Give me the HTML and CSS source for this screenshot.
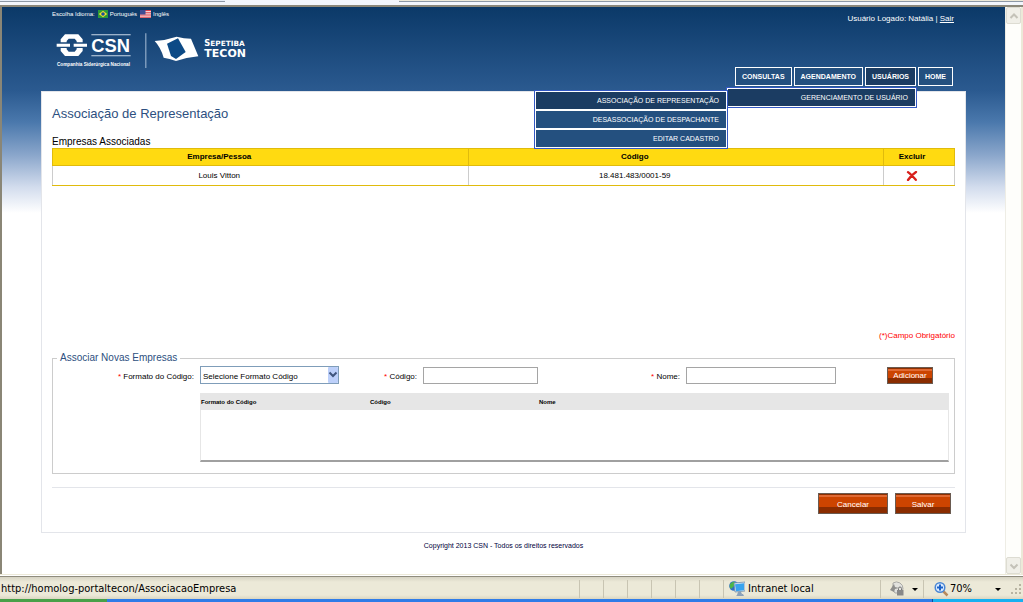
FILE: index.html
```html
<!DOCTYPE html>
<html lang="pt-BR">
<head>
<meta charset="utf-8">
<title>Associação de Representação</title>
<link rel="stylesheet" href="styles.css">
</head>
<body>
<div class="tabstrip">
  <span class="tab tab-left"></span>
  <span class="tab-space"></span>
  <span class="tab tab-right"></span>
</div>

<div class="viewport">
  <div class="page">
    <header class="header">
      <div class="brand">
        <div class="langs">
          <span>Escolha Idioma:</span>
          <a href="#pt"><svg class="flag" viewBox="0 0 10 8"><rect width="10" height="8" fill="#2a9a3c"/><path d="M5 .8 9.2 4 5 7.2.8 4z" fill="#f4e02a"/><circle cx="5" cy="4" r="1.8" fill="#1d4f9c"/></svg>Português</a>
          <a href="#en"><svg class="flag flag-us" viewBox="0 0 11 8"><rect width="11" height="8" fill="#f3d4d6"/><path d="M0 .5h11M0 2.7h11M0 5h11M0 7.3h11" stroke="#d9404c" stroke-width="1.1"/><rect width="5.5" height="4.5" fill="#3d4d94"/></svg>Inglês</a>
        </div>
        <svg class="logo" viewBox="156 90 630 120" role="img" aria-label="CSN Sepetiba Tecon">
          <g fill="#fff">
            <path d="M182 127v-9l13-15h40l13 15v9h-18v-4l-6-7h-18l-6 7v4z"/>
            <path d="M182 144v9l13 15h40l13-15v-9h-18v4l-6 7h-18l-6-7v-4z"/>
            <path d="M170 131h40v9h-40zM221 131h40v9h-40z"/>
            <path d="M274 103h118v3H274zM274 166h118v3H274z" fill="#c8d6e6"/>
            <text class="logo-csn" x="274" y="156">CSN</text>
            <text class="logo-tag" x="171" y="199">Companhia Siderúrgica Nacional</text>
            <path d="M436 100h3v104h-3z" fill="#a9bfd8"/>
            <path d="M464 123Q500 120 530 110Q552 116 573 116L595 169Q558 173 528 183Q508 176 491 173Q482 142 464 123z"/>
            <path d="M501 131L534 115L557 156L528 177L513 168z" fill="#0c4a86"/>
            <text class="logo-sep" x="613" y="139"><tspan class="logo-cap">S</tspan>EPETIBA</text>
            <text class="logo-tecon" x="613" y="172">TECON</text>
          </g>
        </svg>
      </div>
      <div class="account">
        <p class="user">Usuário Logado: Natália | <a href="#sair">Sair</a></p>
        <nav>
          <ul class="menu">
            <li><a href="#consultas">CONSULTAS</a></li>
            <li><a href="#agendamento">AGENDAMENTO</a></li>
            <li class="open"><a href="#usuarios">USUÁRIOS</a>
              <ul class="submenu level-one">
                <li class="open"><a href="#gerenciamento">GERENCIAMENTO DE USUÁRIO</a>
                  <ul class="submenu level-two">
                    <li class="open"><a href="#associacao">ASSOCIAÇÃO DE REPRESENTAÇÃO</a></li>
                    <li><a href="#desassociacao">DESASSOCIAÇÃO DE DESPACHANTE</a></li>
                    <li><a href="#cadastro">EDITAR CADASTRO</a></li>
                  </ul>
                </li>
              </ul>
            </li>
            <li><a href="#home">HOME</a></li>
          </ul>
        </nav>
      </div>
    </header>

    <main class="card">
      <h1>Associação de Representação</h1>
      <section class="companies">
        <h2>Empresas Associadas</h2>
        <table class="list">
          <colgroup><col><col><col class="col-del"></colgroup>
          <thead><tr><th>Empresa/Pessoa</th><th>Código</th><th>Excluir</th></tr></thead>
          <tbody><tr><td>Louis Vitton</td><td>18.481.483/0001-59</td><td><button class="delete" type="button" aria-label="Excluir"><svg viewBox="0 0 12 10"><path d="M2 1.2Q5 3.5 9.8 8.8M10 1Q5.500 4 2 9" fill="none" stroke="#d8201c" stroke-width="2.300" stroke-linecap="round"/></svg></button></td></tr></tbody>
        </table>
      </section>
      <p class="required">(*)Campo Obrigatório</p>
      <fieldset>
        <legend>Associar Novas Empresas</legend>
        <div class="form">
          <label for="formato"><i>*</i> Formato do Código:</label>
          <span class="select"><select id="formato"><option>Selecione Formato Código</option></select><svg viewBox="0 0 10 16"><rect width="10" height="16" rx="1" fill="#bdd0fa"/><path d="M1.500 5.500 5 9l3.500-3.500" fill="none" stroke="#3f557d" stroke-width="2"/></svg></span>
          <label for="codigo"><i>*</i> Código:</label>
          <input id="codigo" type="text">
          <label for="nome"><i>*</i> Nome:</label>
          <input id="nome" type="text">
          <button class="btn btn-add" type="button">Adicionar</button>
          <div class="results">
            <table>
              <thead><tr><th>Formato do Código</th><th>Código</th><th class="rest">Nome</th></tr></thead>
            </table>
          </div>
        </div>
      </fieldset>
      <div class="actions">
        <button class="btn btn-cancel" type="button">Cancelar</button>
        <button class="btn btn-save" type="button">Salvar</button>
      </div>
    </main>
    <footer>Copyright 2013 CSN - Todos os direitos reservados</footer>
  </div>
  <div class="scrollbar">
    <button type="button" aria-label="Rolar para cima"><svg viewBox="0 0 10 10"><path d="M1.500 7 5 3.500 8.500 7" fill="none" stroke="#c4c2b8" stroke-width="2"/></svg></button>
    <button type="button" aria-label="Rolar para baixo"><svg viewBox="0 0 10 10"><path d="M1.500 3.500 5 7l3.500-3.500" fill="none" stroke="#c4c2b8" stroke-width="2"/></svg></button>
  </div>
</div>

<div class="status">
  <span class="url">http://homolog-portaltecon/AssociacaoEmpresa</span>
  <span class="cell"></span><span class="cell"></span><span class="cell"></span><span class="cell"></span><span class="cell"></span><span class="cell"></span>
  <span class="cell zone"><svg class="ico" viewBox="0 0 16 16"><circle cx="5" cy="5" r="4.800" fill="#2d6fc4"/><path d="M1 3q3-3 5-2l-1 4-3 3Q0 6 1 3z" fill="#4cb648"/><path d="M5 2l11-1v9l-10 1z" fill="#dfe8f2" stroke="#6f8dab" stroke-width=".8"/><path d="M6 3.200l9-1v7l-8 1z" fill="#38a3ee"/><path d="M9 11h3l1 2-5 1zM7 14l7-1 1 2H8z" fill="#8ba0b8"/></svg>Intranet local</span>
  <span class="cell lock"><svg class="ico" viewBox="0 0 16 16"><path d="M4 2a6.500 6.500 0 0 1 10 6l-2 4H6L4 9z" fill="#e2e2de" stroke="#a9a9a5"/><path d="M1 9l4-6 1 3 4 1-4 1-1 3z" fill="#8e8e8c"/><path d="M9.500 9V7.500a1.500 1.500 0 0 1 3 0V9" fill="none" stroke="#777"/><rect x="8" y="9" width="6.500" height="5.500" fill="#888"/></svg><span class="caret"></span></span>
  <span class="cell zoom"><svg class="ico" viewBox="0 0 16 16"><path d="M9.500 9.500l5 5" stroke="#b98a5c" stroke-width="2.500"/><circle cx="7" cy="6.500" r="4.800" fill="#dcecff" stroke="#4a86d4" stroke-width="1.500"/><path d="M7 3.500v6M4 6.500h6" stroke="#1d62c8" stroke-width="2"/></svg>70%<span class="caret caret-end"></span></span>
  <svg class="grip" viewBox="0 0 12 12"><path d="M8 1h2v2H8zM4 5h2v2H4zM8 5h2v2H8zM0 9h2v2H0zM4 9h2v2H4zM8 9h2v2H8z" fill="#b8b4a2"/></svg>
</div>
<div class="taskbar"><span class="start"></span><span class="tasks"></span><span class="tray"></span></div>
</body>
</html>
```
FILE: styles.css
```css
* { box-sizing: border-box; }

body {
  margin: 0;
  min-height: 100vh;
  display: flex;
  flex-direction: column;
  background: #fff;
  color: #000;
  font: 8px/12px "Liberation Sans", Arial, sans-serif;
}
h1, h2, p, ul { margin: 0; padding: 0; font-weight: normal; }
ul { list-style: none; }
button, input, select { font: inherit; margin: 0; border-radius: 0; }
svg { display: block; }

/* Browser tab strip */
.tabstrip {
  display: flex;
  height: 7px;
  background: #f2f6fc;
  border-bottom: 2px solid #8b887a;
}
.tab { height: 2px; border-bottom: 1px solid #8c98a6; background: #e6eef8; }
.tab-left { width: 22%; }
.tab-space { width: 17%; }
.tab-right { flex: 1; background: #ece9d8; }

.viewport {
  flex: 1;
  display: flex;
  border-left: 2px solid #8a8676;
  border-right: 2px solid #ece9d8;
}
.page {
  flex: 1;
  padding: 0 39px;
  background: linear-gradient(#0b3968 0, #2b5a90 84px, #4a78ac 115px, #8aa6cb 148px, #d2dced 180px, #fff 206px);
}

/* Header */
.header { display: flex; justify-content: space-between; height: 84px; padding: 0 12px 0 11px; }
.langs { display: flex; align-items: center; gap: 3px; padding-top: 1px; font-size: 6px; color: #fff; }
.langs a { display: flex; align-items: center; gap: 2px; color: #fff; text-decoration: none; }
.flag { width: 10px; height: 8px; }
.flag-us { width: 11px; }
.logo { width: 210px; height: 40px; margin-top: 10px; }
.logo text { font-family: "Liberation Sans", Arial, sans-serif; font-weight: bold; }
.logo .logo-csn { font-size: 55px; }
.logo .logo-tag { font-size: 14px; }
.logo .logo-sep { font: bold 22px "DejaVu Sans", sans-serif; }
.logo .logo-cap { font-size: 25px; }
.logo .logo-tecon { font: bold 33px "DejaVu Sans", sans-serif; }
.account { display: flex; flex-direction: column; justify-content: space-between; align-items: flex-end; }
.user { padding-top: 6px; color: #fff; }
.user a { color: #fff; }

.menu { display: flex; gap: 2px; padding: 0 1px 5px 0; font-size: 7px; white-space: nowrap; }
.menu a { display: block; color: #fff; text-decoration: none; }
.menu > li { position: relative; border: 1px solid #fff; background: #24507f; }
.menu > li > a { padding: 3px 6px 2px; font-weight: bold; }
.menu .open { background: #1b3c62; }
.submenu {
  position: absolute;
  z-index: 2;
  border: 1px solid #3358c4;
  background: #24507f;
  text-align: right;
}
.submenu a { padding: 3px 7px 2px; }
.submenu li { border: 1px solid #fff; }
.level-one { top: 19px; right: -2px; width: 191px; }
.level-two { top: 2px; right: 188px; width: 194px; }

/* Content card */
.card {
  min-height: 442px;
  padding: 0 10px;
  border: 1px solid #e3e5ea;
  background: #fff;
}
h1 { padding-top: 14px; font-size: 13px; line-height: 16px; color: #2d4f80; }
h2 { padding-top: 14px; font-size: 10px; line-height: 12px; }
.companies { min-height: 208px; }
.list { width: 100%; border-collapse: collapse; table-layout: fixed; }
.col-del { width: 71px; }
.list th, .list td { padding: 0 82px 0 0; border: 1px solid #ccc; text-align: center; }
.list th:last-child, .list td:last-child { padding-right: 14px; }
.list th { height: 17px; border-color: #e0bb0c; background: #ffda11; }
.list td { height: 20px; border-bottom-color: #e0bb0c; }
.delete { display: block; margin: 0 auto; padding: 0; border: 0; background: none; }
.delete svg { width: 12px; height: 10px; }

.required { color: #f00; text-align: right; }
fieldset {
  min-width: 0;
  min-height: 121px;
  margin: 10px 0 0;
  padding: 0 0 11px;
  border: 1px solid #ccc;
}
legend { margin-left: 4px; padding: 0 3px; font-size: 10px; line-height: 12px; color: #2d4f80; }
.form {
  display: grid;
  grid-template-columns: 147fr 139fr 84fr 115fr 148fr 150fr 51fr 62fr 5fr;
  row-gap: 9px;
  align-items: center;
  padding-top: 2px;
}
label { padding: 3px 6px 0 0; text-align: right; white-space: nowrap; }
label i { color: #f00; font-style: normal; }
.form input { width: 100%; height: 17px; padding: 0 3px; border: 1px solid #a5a5a5; }
.select { position: relative; }
.select select {
  display: block;
  width: 100%;
  height: 18px;
  padding: 3px 12px 0 2px;
  border: 1px solid #7f9db9;
  background: #fff;
  color: #000;
  appearance: none;
}
.select svg { position: absolute; top: 1px; right: 1px; width: 10px; height: 16px; }

.btn {
  padding: 2px 0 0;
  border: 1px solid #6a5a50;
  background: linear-gradient(#8e2f00 0 1px, #e06a34 1px 3px, #cc4400 3px 68%, #8a2c00 68%);
  color: #fff;
  font-size: 8px;
  line-height: 12px;
}
.btn-add { grid-column: 8; justify-self: start; width: 46px; height: 17px; }
.results {
  grid-column: 2 / 9;
  height: 69px;
  border: 1px solid #e6e6e6;
  border-bottom: 2px solid #a0a0a0;
}
.results table { width: 100%; border-collapse: collapse; table-layout: fixed; background: #e6e6e6; }
.results th { width: 169px; height: 16px; padding: 0; font-size: 6px; text-align: left; }
.results .rest { width: auto; }

.actions {
  display: flex;
  justify-content: flex-end;
  gap: 7px;
  margin-top: 13px;
  padding: 5px 4px 18px 0;
  border-top: 1px solid #e3e5ea;
}
.actions .btn { height: 21px; }
.btn-cancel { width: 70px; }
.btn-save { width: 56px; }
footer { padding-top: 7px; font-size: 7px; text-align: center; color: #00003c; }

/* Window scrollbar */
.scrollbar {
  display: flex;
  flex-direction: column;
  justify-content: space-between;
  width: 16px;
  border-left: 1px solid #eeede5;
  background: #fefefb;
}
.scrollbar button {
  width: 15px;
  height: 17px;
  padding: 2px;
  border: 1px solid #dddcd2;
  border-radius: 2px;
  background: #f0efe8;
}
.scrollbar svg { width: 10px; height: 10px; }

/* Status bar and taskbar */
.status {
  display: flex;
  align-items: center;
  height: 25px;
  border-top: 1px solid #ece9d8;
  background: linear-gradient(#fff 0 1px, #8f8c7e 1px 2px, #d6d3c3 2px, #ece9d8 7px, #ece9d8 20px, #dad6c2);
  font: 11px/20px "DejaVu Sans Condensed", "DejaVu Sans", sans-serif;
}
.status > * { margin-top: 4px; }
.url { flex: 1; padding-left: 1px; }
.cell { display: flex; align-items: center; width: 24px; height: 18px; border-left: 1px solid #c8c4b2; }
.ico { width: 16px; height: 16px; }
.zone { width: 157px; gap: 3px; padding-left: 5px; }
.lock { width: 43px; gap: 7px; padding-left: 8px; }
.zoom { width: 88px; gap: 1px; padding-left: 9px; }
.caret { border: 3px solid transparent; border-top-color: #000; border-bottom: 0; }
.caret-end { margin-left: auto; margin-right: 10px; }
.grip { width: 12px; height: 12px; }
.taskbar { display: flex; height: 3px; background: #2f7ce8; }
.start { width: 107px; background: #48a048; }
.tasks { flex: 1; }
.tray { width: 91px; border-left: 1px solid #0b4a9c; background: #18b0f0; }
```
